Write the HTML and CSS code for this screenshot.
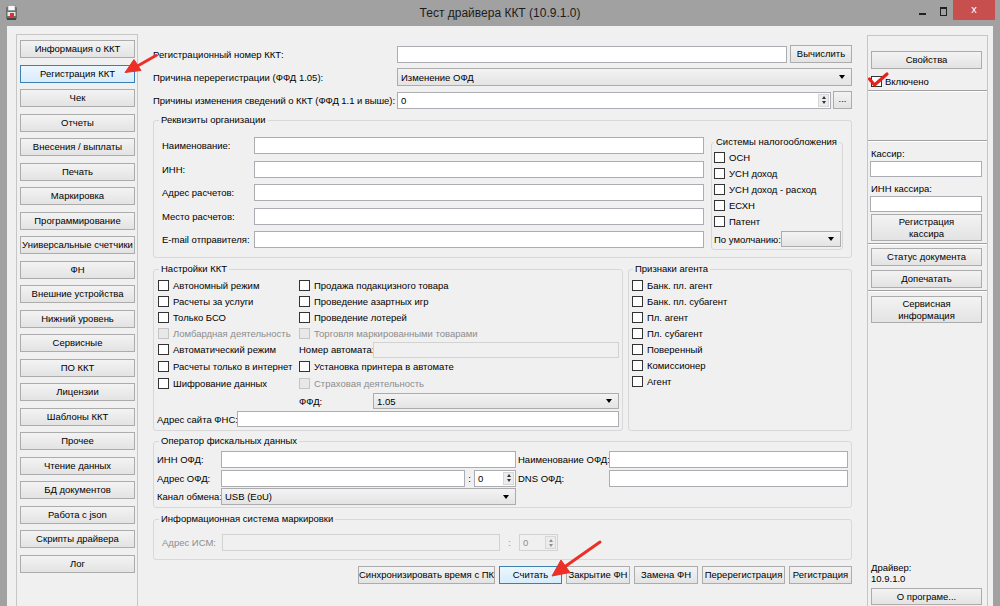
FILE: index.html
```html
<!DOCTYPE html>
<html lang="ru">
<head>
<meta charset="utf-8">
<title>Тест драйвера ККТ (10.9.1.0)</title>
<link rel="stylesheet" href="styles.css">
</head>
<body>
<div class="window">
  <div class="titlebar">
    <svg class="appicon" width="14" height="16" viewBox="0 0 14 16">
      <rect x="1" y="2" width="11" height="12" rx="1" fill="#6d6d6d"/>
      <rect x="3" y="0.5" width="7" height="5" fill="#fafafa" stroke="#888" stroke-width="0.6"/>
      <rect x="2.5" y="7" width="8" height="4" fill="#e9e9e9"/>
      <rect x="5" y="8" width="4" height="4" fill="#d8342c"/>
      <rect x="2" y="13" width="9" height="2" fill="#444"/>
    </svg>
    <div class="title">Тест драйвера ККТ (10.9.1.0)</div>
    <div class="wctl">
      <span class="wmin"></span>
      <span class="wmax"></span>
      <span class="wclose">x</span>
    </div>
  </div>

  <div class="client">
    <nav class="nav">
      <div class="btn">Информация о ККТ</div>
      <div class="btn hot">Регистрация ККТ</div>
      <div class="btn">Чек</div>
      <div class="btn">Отчеты</div>
      <div class="btn">Внесения / выплаты</div>
      <div class="btn">Печать</div>
      <div class="btn">Маркировка</div>
      <div class="btn">Программирование</div>
      <div class="btn">Универсальные счетчики</div>
      <div class="btn">ФН</div>
      <div class="btn">Внешние устройства</div>
      <div class="btn">Нижний уровень</div>
      <div class="btn">Сервисные</div>
      <div class="btn">ПО ККТ</div>
      <div class="btn">Лицензии</div>
      <div class="btn">Шаблоны ККТ</div>
      <div class="btn">Прочее</div>
      <div class="btn">Чтение данных</div>
      <div class="btn">БД документов</div>
      <div class="btn">Работа с json</div>
      <div class="btn">Скрипты драйвера</div>
      <div class="btn">Лог</div>
    </nav>

    <main class="main">
      <div class="frow">
        <span class="flabel">Регистрационный номер ККТ:</span>
        <div class="in grow"></div>
        <div class="btn calc">Вычислить</div>
      </div>
      <div class="frow">
        <span class="flabel">Причина перерегистрации (ФФД 1.05):</span>
        <div class="combo grow"><span>Изменение ОФД</span></div>
      </div>
      <div class="frow">
        <span class="flabel tight">Причины изменения сведений о ККТ (ФФД 1.1 и выше):</span>
        <div class="spin grow"><span>0</span><span class="arr"><i class="up"></i><i class="dn"></i></span></div>
        <div class="btn dots">...</div>
      </div>

      <fieldset class="group g-req">
        <legend>Реквизиты организации</legend>
        <div class="req">
          <div class="reqgrid">
            <span>Наименование:</span><div class="in"></div>
            <span>ИНН:</span><div class="in"></div>
            <span>Адрес расчетов:</span><div class="in"></div>
            <span>Место расчетов:</span><div class="in"></div>
            <span>E-mail отправителя:</span><div class="in"></div>
          </div>
          <fieldset class="group g-tax">
            <legend>Системы налогообложения</legend>
            <div class="tax">
              <label class="chk"><i></i>ОСН</label>
              <label class="chk"><i></i>УСН доход</label>
              <label class="chk"><i></i>УСН доход - расход</label>
              <label class="chk"><i></i>ЕСХН</label>
              <label class="chk"><i></i>Патент</label>
              <div class="defrow"><span>По умолчанию:</span><div class="combo small"></div></div>
            </div>
          </fieldset>
        </div>
      </fieldset>

      <div class="pair">
        <fieldset class="group g-set">
          <legend>Настройки ККТ</legend>
          <div class="setgrid">
            <label class="chk"><i></i>Автономный режим</label>
            <label class="chk"><i></i>Продажа подакцизного товара</label>
            <label class="chk"><i></i>Расчеты за услуги</label>
            <label class="chk"><i></i>Проведение азартных игр</label>
            <label class="chk"><i></i>Только БСО</label>
            <label class="chk"><i></i>Проведение лотерей</label>
            <label class="chk dis"><i></i>Ломбардная деятельность</label>
            <label class="chk dis"><i></i>Торговля маркированными товарами</label>
            <label class="chk"><i></i>Автоматический режим</label>
            <div class="lblin"><span class="w74">Номер автомата:</span><div class="in dis grow"></div></div>
            <label class="chk"><i></i>Расчеты только в интернет</label>
            <label class="chk"><i></i>Установка принтера в автомате</label>
            <label class="chk"><i></i>Шифрование данных</label>
            <label class="chk dis"><i></i>Страховая деятельность</label>
            <span></span>
            <div class="lblin"><span class="w74">ФФД:</span><div class="combo grow"><span>1.05</span></div></div>
            <div class="lblin span2"><span class="w80">Адрес сайта ФНС:</span><div class="in grow"></div></div>
          </div>
        </fieldset>
        <fieldset class="group g-agent">
          <legend>Признаки агента</legend>
          <div class="agent">
            <label class="chk"><i></i>Банк. пл. агент</label>
            <label class="chk"><i></i>Банк. пл. субагент</label>
            <label class="chk"><i></i>Пл. агент</label>
            <label class="chk"><i></i>Пл. субагент</label>
            <label class="chk"><i></i>Поверенный</label>
            <label class="chk"><i></i>Комиссионер</label>
            <label class="chk"><i></i>Агент</label>
          </div>
        </fieldset>
      </div>

      <fieldset class="group g-ofd">
        <legend>Оператор фискальных данных</legend>
        <div class="ofd">
          <span>ИНН ОФД:</span><div class="in"></div>
          <span class="l2">Наименование ОФД:</span><div class="in"></div>
          <span>Адрес ОФД:</span>
          <div class="addr"><div class="in grow"></div><span class="colon">:</span><div class="spin port"><span>0</span><span class="arr"><i class="up"></i><i class="dn"></i></span></div></div>
          <span class="l2">DNS ОФД:</span><div class="in"></div>
          <span>Канал обмена:</span><div class="combo"><span>USB (EoU)</span></div>
        </div>
      </fieldset>

      <fieldset class="group g-ism">
        <legend>Информационная система маркировки</legend>
        <div class="ism">
          <span class="dtext w60">Адрес ИСМ:</span>
          <div class="in dis ismin"></div>
          <span class="colon dtext wide">:</span>
          <div class="spin port dis"><span>0</span><span class="arr"><i class="up"></i><i class="dn"></i></span></div>
        </div>
      </fieldset>

      <div class="actions">
        <div class="btn b-sync">Синхронизировать время с ПК</div>
        <div class="btn hot b-read">Считать</div>
        <div class="btn b-close">Закрытие ФН</div>
        <div class="btn b-repl">Замена ФН</div>
        <div class="btn b-rereg">Перерегистрация</div>
        <div class="btn b-reg">Регистрация</div>
      </div>
    </main>

    <aside class="side">
      <div class="btn">Свойства</div>
      <label class="chk on"><i></i>Включено</label>
      <div class="sep s1"></div>
      <div class="sep s2"></div>
      <div class="slabel">Кассир:</div>
      <div class="in sin"></div>
      <div class="slabel">ИНН кассира:</div>
      <div class="in sin"></div>
      <div class="btn tall">Регистрация<br>кассира</div>
      <div class="sep s3"></div>
      <div class="btn">Статус документа</div>
      <div class="btn">Допечатать</div>
      <div class="sep s4"></div>
      <div class="btn tall">Сервисная<br>информация</div>
      <div class="bottom">
        <div class="ver">Драйвер:<br>10.9.1.0</div>
        <div class="btn about">О програме...</div>
      </div>
    </aside>
  </div>

  <svg class="overlay" width="1000" height="606" viewBox="0 0 1000 606">
    <g fill="#ec3027" stroke="#ec3027">
      <line x1="156" y1="55.5" x2="134" y2="68" stroke-width="3" stroke-linecap="round"/>
      <polygon points="125,72.5 141,70.5 134,59.5" stroke-width="1" stroke-linejoin="round"/>
      <line x1="600" y1="542" x2="563" y2="568" stroke-width="3" stroke-linecap="round"/>
      <polygon points="552,576 570,572.5 561,560" stroke-width="1" stroke-linejoin="round"/>
    </g>
    <path d="M869.5 79 L874.5 85 L887 74" fill="none" stroke="#e3231b" stroke-width="3.2" stroke-linecap="round" stroke-linejoin="round"/>
  </svg>
</div>
</body>
</html>
```

FILE: styles.css
```css
* { box-sizing: border-box; }
html, body { margin: 0; padding: 0; }
body {
  width: 1000px;
  height: 606px;
  overflow: hidden;
  background: #a1a1a1;
  font-family: "Liberation Sans", Arial, sans-serif;
  font-size: 9.5px;
  color: #000;
  white-space: nowrap;
}
.window {
  position: relative;
  width: 1000px;
  height: 606px;
  background: #a1a1a1;
  overflow: hidden;
}

/* title bar */
.titlebar {
  height: 26px;
  display: grid;
  grid-template-columns: 1fr auto 1fr;
  align-items: start;
}
.appicon { margin: 5px 0 0 5px; }
.title {
  font-size: 12px;
  line-height: 27px;
  color: #1c1c1c;
}
.wctl {
  justify-self: end;
  display: flex;
  align-items: flex-start;
  margin-right: 5px;
}
.wmin { width: 7px; height: 2px; background: #202020; margin: 13px 14px 0 0; }
.wmax { width: 7px; height: 9px; border: 1px solid #202020; border-top-width: 2px; margin: 7px 6px 0 0; }
.wclose {
  width: 42px;
  height: 20px;
  background: #c7504f;
  color: #fff;
  font: 11px/19px "Liberation Sans", Arial, sans-serif;
  text-align: center;
}

/* client */
.client {
  margin: 0 7px;
  height: 580px;
  background: #f0f0f0;
  display: flex;
  align-items: flex-start;
  padding-top: 8px;
}

/* generic controls */
.btn {
  height: 18px;
  border: 1px solid #acacac;
  background: linear-gradient(#f3f3f3, #e3e3e3);
  text-align: center;
  line-height: 16px;
  color: #000;
  overflow: hidden;
}
.btn.hot {
  background: linear-gradient(#ecf6fd, #d7ecfb);
  border-color: #3c7fb1;
}
.in {
  height: 17px;
  background: #fff;
  border: 1px solid #abadb3;
}
.in.dis { background: #f0f0f0; border-color: #d2d2d2; }
.grow { flex: 1; min-width: 0; }
.combo {
  height: 18px;
  display: flex;
  align-items: center;
  padding-left: 3px;
  border: 1px solid #acacac;
  background: linear-gradient(#f3f3f3, #e4e4e4);
}
.combo::after {
  content: "";
  margin-left: auto;
  margin-right: 6px;
  border-left: 3.5px solid transparent;
  border-right: 3.5px solid transparent;
  border-top: 4px solid #000;
}
.spin {
  height: 17px;
  display: flex;
  align-items: center;
  padding-left: 3px;
  background: #fff;
  border: 1px solid #abadb3;
}
.spin .arr {
  margin-left: auto;
  margin-right: 1px;
  width: 11px;
  height: 13px;
  display: flex;
  flex-direction: column;
  align-items: center;
  justify-content: center;
  gap: 2px;
  background: #ececec;
  border: 1px solid #d6d6d6;
}
.spin .arr i { width: 0; height: 0; border-left: 2.5px solid transparent; border-right: 2.5px solid transparent; }
.spin .arr .up { border-bottom: 3px solid #333; }
.spin .arr .dn { border-top: 3px solid #333; }
.spin.dis { background: #f0f0f0; border-color: #d2d2d2; color: #8d8d8d; }
.spin.dis .arr i { opacity: .5; }

.chk {
  display: flex;
  align-items: center;
  gap: 4px;
  height: 16px;
}
.chk i {
  flex: none;
  width: 11px;
  height: 11px;
  border: 1px solid #333;
  background: #fff;
}
.chk.dis { color: #8d8d8d; }
.chk.dis i { border-color: #c5c5c5; background: #e8e8e8; }

.group {
  margin: 0;
  padding: 0;
  min-width: 0;
  border: 1px solid #d8d8d8;
  border-radius: 3px;
}
.group > legend {
  padding: 0 2px;
  margin-left: 5px;
  line-height: 12px;
}

/* left nav */
.nav {
  margin-left: 9px;
  width: 122px;
  height: 600px;
  flex: none;
  border: 1px solid #c6c6c6;
  padding: 5px 0 0 3px;
  display: flex;
  flex-direction: column;
  gap: 6.5px;
}
.nav .btn { width: 115px; flex: none; }

/* center */
.main {
  width: 715px;
  flex: none;
  margin-left: 7px;
  padding: 11px 8px 0 8px;
  display: flex;
  flex-direction: column;
}
.frow {
  display: flex;
  align-items: center;
  height: 18px;
  margin-bottom: 5px;
}
.flabel { width: 244px; flex: none; }
.flabel.tight { letter-spacing: -0.06px; }
.btn.calc { width: 62px; margin-left: 3px; }
.btn.dots { width: 19px; margin-left: 2px; line-height: 14px; }

.req {
  display: flex;
  align-items: flex-start;
  padding: 10px 8px 7px 8px;
}
.reqgrid {
  display: grid;
  grid-template-columns: 92px 450px;
  grid-auto-rows: 17px;
  row-gap: 6.5px;
  align-items: center;
  margin-top: 1px;
}
.g-tax { width: 132px; margin-left: 7px; flex: none; }
.g-tax > legend { margin-left: 2px; }
.tax { padding: 1px 1px 2px 2px; display: flex; flex-direction: column; }
.defrow { display: flex; align-items: center; margin-top: 2px; height: 16px; }
.combo.small { width: 62px; height: 16px; margin-left: auto; }

.pair { display: flex; gap: 5px; margin-top: 5px; }
.g-set { width: 470px; flex: none; }
.g-agent { width: 224px; flex: none; }
.g-agent > legend { margin-left: 4px; }
.setgrid {
  display: grid;
  grid-template-columns: 141px 320px;
  grid-template-rows: 16px 16px 16px 16px 17px 17px 17px 18px 18px;
  padding: 2px 3px 2px 4px;
}
.setgrid .chk { height: auto; }
.lblin { display: flex; align-items: center; }
.lblin .in, .lblin .combo { height: 16px; }
.w74 { width: 74px; flex: none; }
.w80 { width: 80px; flex: none; }
.span2 { grid-column: 1 / 3; margin-left: -1px; }
.agent { padding: 2px 3px 0 3px; display: flex; flex-direction: column; }

.g-ofd { margin-top: 4px; }
.ofd {
  display: grid;
  grid-template-columns: 64px 295px 93px 239px;
  grid-auto-rows: 17px;
  row-gap: 1.5px;
  align-items: center;
  padding: 4px 3px 2px 3px;
}
.ofd .l2 { padding-left: 2px; }
.addr { display: flex; align-items: center; height: 17px; }
.colon { width: 9px; text-align: center; flex: none; }
.spin.port { width: 42px; flex: none; }
.ofd .combo { height: 17px; }

.g-ism { margin-top: 5px; }
.ism {
  display: flex;
  align-items: center;
  padding: 9px 8px 8px 8px;
}
.dtext { color: #8d8d8d; }
.w60 { width: 60px; flex: none; }
.ismin { width: 278px; }
.colon.wide { width: 19px; }
.ism .spin.port { width: 39px; }

.actions {
  display: flex;
  justify-content: flex-end;
  gap: 4px;
  margin-top: 6px;
}
.b-sync { width: 137px; }
.b-read { width: 63px; }
.b-close { width: 64px; }
.b-repl { width: 64px; }
.b-rereg { width: 83px; }
.b-reg { width: 63px; }

/* right side */
.side {
  margin: 1px 0 0 7px;
  width: 121px;
  height: 572px;
  flex: none;
  border: 1px solid #c6c6c6;
  padding: 15px 5px 1px 3px;
  display: flex;
  flex-direction: column;
}
.side .btn { width: 111px; flex: none; }
.side .chk.on { margin-top: 4px; gap: 3px; }
.sep {
  margin: 0 -5px 0 -3px;
  height: 2px;
  border-top: 1px solid #a0a0a0;
  border-bottom: 1px solid #fff;
  flex: none;
}
.s1 { margin-top: 1px; }
.s2 { margin-top: 48px; }
.s3 { margin-top: 2px; margin-bottom: 3px; }
.s4 { margin-top: 2px; margin-bottom: 2px; }
.slabel { line-height: 13px; margin-top: 5px; }
.in.sin { height: 16px; margin-top: 1px; }
.side .in.sin { width: 112px; margin-left: -1px; }
.side .btn.tall { height: 27px; line-height: 12px; padding-top: 1px; margin-top: 2px; }
.side .btn + .btn { margin-top: 4px; }
.bottom { margin-top: auto; }
.ver { line-height: 11px; margin-bottom: 4px; }
.btn.about { height: 17px; }

/* annotation overlay */
.overlay {
  position: absolute;
  left: 0;
  top: 0;
  pointer-events: none;
}
```
